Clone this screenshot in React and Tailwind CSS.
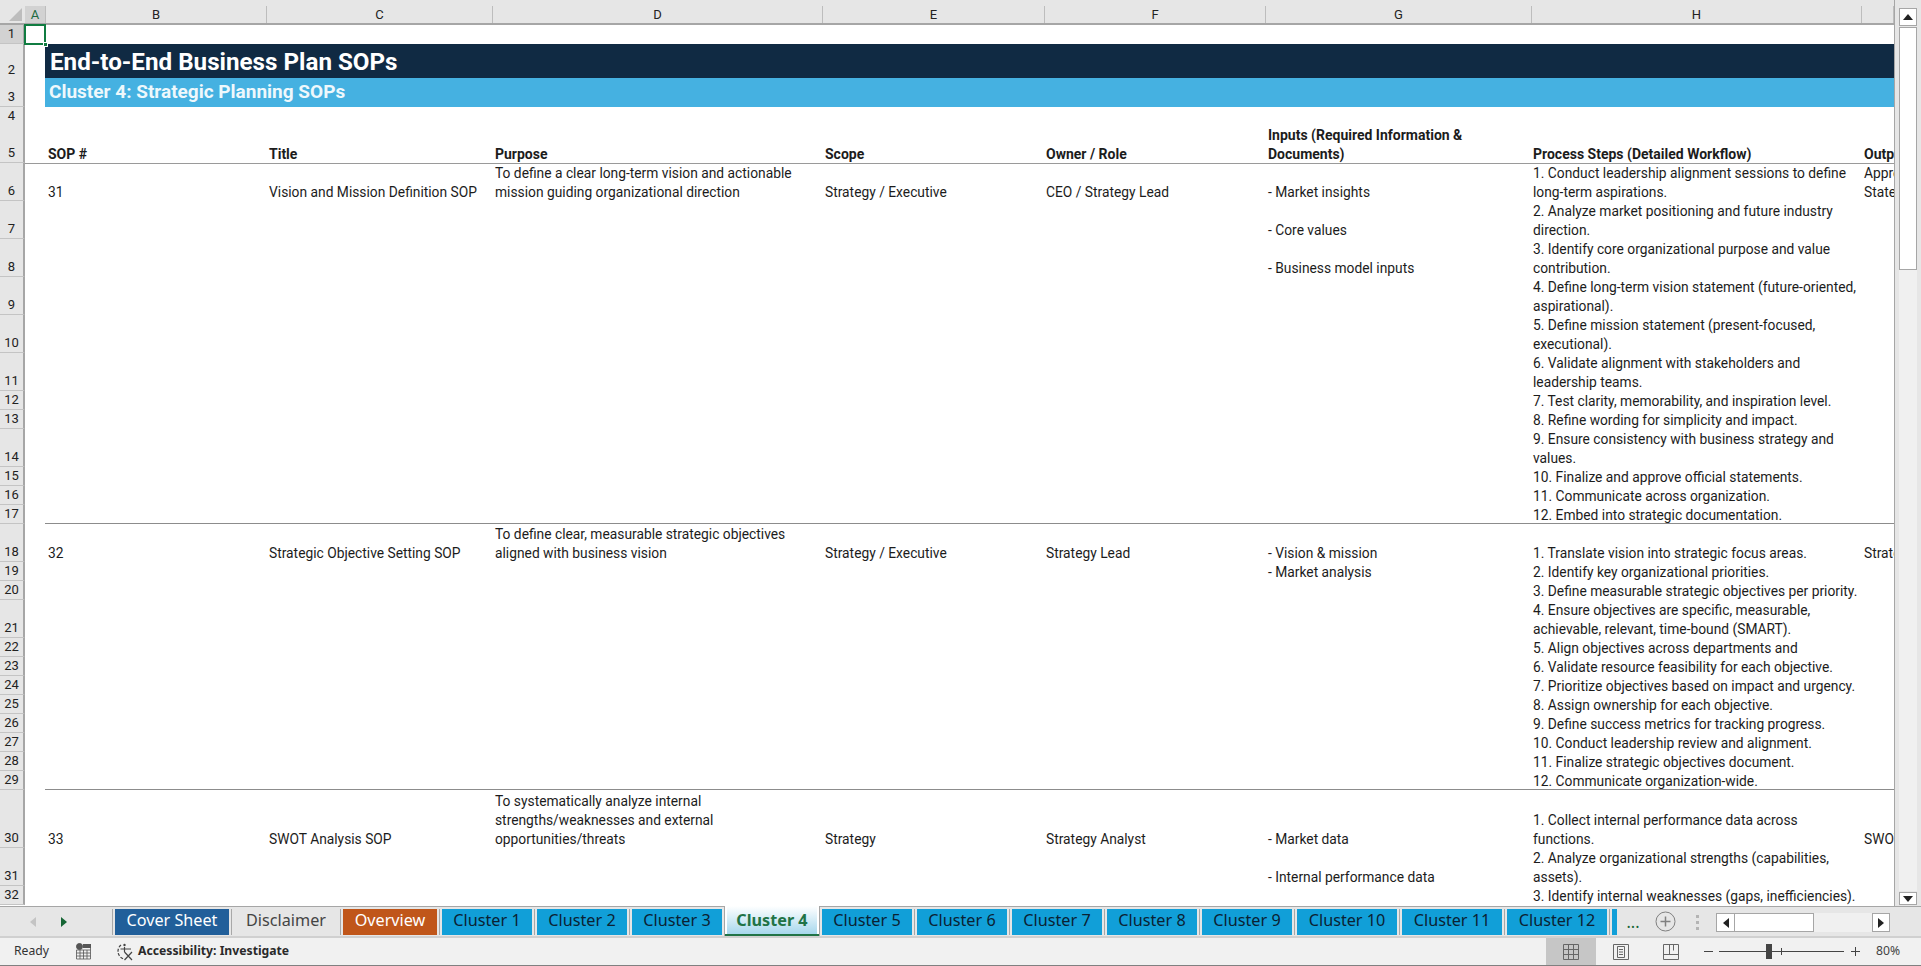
const cols = ["A", "B", "C", "D", "E", "F", "G", "H", "I"];
const colWidths = {
  A: "w-[21px]",
  B: "w-[221px]",
  C: "w-[226px]",
  D: "w-[330px]",
  E: "w-[222px]",
  F: "w-[221px]",
  G: "w-[266px]",
  H: "w-[330px]",
  I: "w-[32px]",
};

const gridCols = "grid grid-cols-[25px_20px_221px_226px_330px_221px_222px_265px_331px_33px]";

const rows = [
  { n: 6, h: "h-[38px]", b: "31", c: "Vision and Mission Definition SOP", d: "To define a clear long-term vision and actionable\nmission guiding organizational direction", e: "Strategy / Executive", f: "CEO / Strategy Lead", g: "- Market insights", p: "1. Conduct leadership alignment sessions to define\nlong-term aspirations.", i: "Approved\nStatements" },
  { n: 7, h: "h-[38px]", g: "- Core values", p: "2. Analyze market positioning and future industry\ndirection." },
  { n: 8, h: "h-[38px]", g: "- Business model inputs", p: "3. Identify core organizational purpose and value\ncontribution." },
  { n: 9, h: "h-[38px]", p: "4. Define long-term vision statement (future-oriented,\naspirational)." },
  { n: 10, h: "h-[38px]", p: "5. Define mission statement (present-focused,\nexecutional)." },
  { n: 11, h: "h-[38px]", p: "6. Validate alignment with stakeholders and\nleadership teams." },
  { n: 12, h: "h-[19px]", p: "7. Test clarity, memorability, and inspiration level." },
  { n: 13, h: "h-[19px]", p: "8. Refine wording for simplicity and impact." },
  { n: 14, h: "h-[38px]", p: "9. Ensure consistency with business strategy and\nvalues." },
  { n: 15, h: "h-[19px]", p: "10. Finalize and approve official statements." },
  { n: 16, h: "h-[19px]", p: "11. Communicate across organization." },
  { n: 17, h: "h-[19px]", p: "12. Embed into strategic documentation.", line: true },
  { n: 18, h: "h-[38px]", b: "32", c: "Strategic Objective Setting SOP", d: "To define clear, measurable strategic objectives\naligned with business vision", e: "Strategy / Executive", f: "Strategy Lead", g: "- Vision & mission", p: "1. Translate vision into strategic focus areas.", i: "Strategic" },
  { n: 19, h: "h-[19px]", g: "- Market analysis", p: "2. Identify key organizational priorities." },
  { n: 20, h: "h-[19px]", p: "3. Define measurable strategic objectives per priority." },
  { n: 21, h: "h-[38px]", p: "4. Ensure objectives are specific, measurable,\nachievable, relevant, time-bound (SMART)." },
  { n: 22, h: "h-[19px]", p: "5. Align objectives across departments and" },
  { n: 23, h: "h-[19px]", p: "6. Validate resource feasibility for each objective." },
  { n: 24, h: "h-[19px]", p: "7. Prioritize objectives based on impact and urgency." },
  { n: 25, h: "h-[19px]", p: "8. Assign ownership for each objective." },
  { n: 26, h: "h-[19px]", p: "9. Define success metrics for tracking progress." },
  { n: 27, h: "h-[19px]", p: "10. Conduct leadership review and alignment." },
  { n: 28, h: "h-[19px]", p: "11. Finalize strategic objectives document." },
  { n: 29, h: "h-[19px]", p: "12. Communicate organization-wide.", line: true },
  { n: 30, h: "h-[58px]", b: "33", c: "SWOT Analysis SOP", d: "To systematically analyze internal\nstrengths/weaknesses and external\nopportunities/threats", e: "Strategy", f: "Strategy Analyst", g: "- Market data", p: "1. Collect internal performance data across\nfunctions.", i: "SWOT" },
  { n: 31, h: "h-[38px]", g: "- Internal performance data", p: "2. Analyze organizational strengths (capabilities,\nassets)." },
  { n: 32, h: "h-[19px]", p: "3. Identify internal weaknesses (gaps, inefficiencies)." },
];

const tabs = [
  { name: "Cover Sheet", w: "w-[114px]", cls: "bg-[#215f9a] text-white" },
  { name: "Disclaimer", w: "w-[104px]", cls: "text-[#444444]" },
  { name: "Overview", w: "w-[94px]", cls: "bg-[#c0561a] text-white" },
  { name: "Cluster 1", w: "w-[90px]", cls: "bg-[#119fd8] text-[#0b2233]" },
  { name: "Cluster 2", w: "w-[90px]", cls: "bg-[#119fd8] text-[#0b2233]" },
  { name: "Cluster 3", w: "w-[90px]", cls: "bg-[#119fd8] text-[#0b2233]" },
];

const tabsAfter = [
  { name: "Cluster 5", w: "w-[90px]" },
  { name: "Cluster 6", w: "w-[90px]" },
  { name: "Cluster 7", w: "w-[90px]" },
  { name: "Cluster 8", w: "w-[90px]" },
  { name: "Cluster 9", w: "w-[90px]" },
  { name: "Cluster 10", w: "w-[100px]" },
  { name: "Cluster 11", w: "w-[100px]" },
  { name: "Cluster 12", w: "w-[100px]" },
];

function Cell({ children, bold }) {
  return (
    <div className={`flex items-end min-w-0 overflow-hidden px-[3px] leading-[19px] whitespace-pre ${bold ? "font-bold text-[14px]" : ""}`}>
      <span className="translate-y-[1px]">{children}</span>
    </div>
  );
}

function RowLabel({ n, active }) {
  return (
    <div
      className={`flex items-end justify-center border-r-2 border-b border-r-[#a6a6a6] border-b-[#c4c4c4] text-[13px] leading-[18px] text-[#222222] ${
        active ? "bg-[#d2d2d2] text-[#1d6b40]" : "bg-[#e6e6e6]"
      }`}
    >
      {n}
    </div>
  );
}

function Triangle({ dir, color }) {
  return (
    <svg width="8" height="12" viewBox="0 0 8 12">
      <path d={dir === "left" ? "M7 1 L1 6 L7 11 Z" : "M1 1 L7 6 L1 11 Z"} fill={color} />
    </svg>
  );
}

function Sep() {
  return <div className="w-[1px] h-[26px] mx-[2px] bg-[#a8a8a8]" />;
}

export default function App() {
  return (
    <div className="w-screen h-screen flex flex-col overflow-hidden bg-white text-[13.8px] text-[#1c1c1c] font-['Roboto',sans-serif]">
      <div className="flex h-[906px] min-h-0">
        {/* sheet */}
        <div className="relative w-[1895px] overflow-hidden border-r border-r-[#a6a6a6]">
          <div className="flex h-[25px] bg-[#e6e6e6] border-b-2 border-b-[#a6a6a6] text-[13px]">
            <div className="relative w-[25px]">
              <svg className="absolute right-[3px] bottom-[2px]" width="13" height="13" viewBox="0 0 13 13">
                <path d="M13 0 V13 H0 Z" fill="#bdbdbd" />
              </svg>
            </div>
            {cols.map((c) => (
              <div
                key={c}
                className={`${colWidths[c]} mt-[6px] flex items-center justify-center border-r border-r-[#bdbdbd] ${
                  c === "A" ? "bg-[#d2d2d2] text-[#1d6b40]" : "text-[#222222]"
                }`}
              >
                {c === "I" ? "" : c}
              </div>
            ))}
          </div>

          <div className={`${gridCols} h-[19px]`}>
            <RowLabel n={1} active />
          </div>
          <div className={`${gridCols} h-[34px]`}>
            <RowLabel n={2} />
            <div />
            <div className="col-span-8 bg-[#102a43] flex items-center pl-[5px] text-[24.2px] font-bold text-white whitespace-nowrap">
              End-to-End Business Plan SOPs
            </div>
          </div>
          <div className={`${gridCols} h-[29px]`}>
            <RowLabel n={3} />
            <div />
            <div className="col-span-8 bg-[#45b1e1] flex items-center pl-[4px] text-[19px] font-bold text-[#eef8fc] whitespace-nowrap">
              Cluster 4: Strategic Planning SOPs
            </div>
          </div>
          <div className={`${gridCols} h-[18px]`}>
            <RowLabel n={4} />
          </div>
          <div className={`${gridCols} h-[38px] relative`}>
            <RowLabel n={5} />
            <div />
            <Cell bold>SOP #</Cell>
            <Cell bold>Title</Cell>
            <Cell bold>Purpose</Cell>
            <Cell bold>Scope</Cell>
            <Cell bold>Owner / Role</Cell>
            <Cell bold>{"Inputs (Required Information &\nDocuments)"}</Cell>
            <Cell bold>Process Steps (Detailed Workflow)</Cell>
            <Cell bold>Outputs</Cell>
            <div className="absolute left-[25px] right-0 -bottom-[1px] h-[1px] bg-[#9a9a9a]" />
          </div>

          {rows.map((r) => (
            <div key={r.n} className={`${gridCols} ${r.h} relative`}>
              <RowLabel n={r.n} />
              <div />
              <Cell>{r.b}</Cell>
              <Cell>{r.c}</Cell>
              <Cell>{r.d}</Cell>
              <Cell>{r.e}</Cell>
              <Cell>{r.f}</Cell>
              <Cell>{r.g}</Cell>
              <Cell>{r.p}</Cell>
              <Cell>{r.i}</Cell>
              {r.line && <div className="absolute left-[45px] right-0 bottom-0 h-[1px] bg-[#8c8c8c]" />}
            </div>
          ))}

          {/* active cell A1 */}
          <div className="absolute left-[24px] top-[24px] w-[22px] h-[21px] border-2 border-[#107c41]" />
          <div className="absolute left-[43px] top-[42px] w-[5px] h-[5px] bg-[#107c41] border border-white" />
        </div>

        {/* vertical scrollbar */}
        <div className="w-[26px] flex flex-col items-center bg-[#e6e6e6] pt-[8px] pb-[1px]">
          <div className="w-[18px] h-[18px] bg-white border border-[#a6a6a6] flex items-center justify-center">
            <svg width="10" height="6" viewBox="0 0 10 6"><path d="M5 0 L10 6 H0 Z" fill="#222222" /></svg>
          </div>
          <div className="w-[18px] flex-1 flex flex-col bg-[#f0f0f0] my-[1px]">
            <div className="h-[243px] bg-white border border-[#a6a6a6]" />
          </div>
          <div className="w-[18px] h-[13px] bg-white border border-[#a6a6a6] flex items-center justify-center">
            <svg width="10" height="6" viewBox="0 0 10 6"><path d="M0 0 H10 L5 6 Z" fill="#222222" /></svg>
          </div>
        </div>
      </div>

      {/* sheet tabs */}
      <div className="relative flex h-[32px] items-start bg-[#e6e6e6] border-t border-t-[#a6a6a6] border-b-2 border-b-[#d0d0d0] pt-[2px] text-[16.2px] font-['Noto_Sans',sans-serif]">
        <div className="w-[112px] h-[26px] flex items-center">
          <div className="ml-[29px]"><Triangle dir="left" color="#c4c4c4" /></div>
          <div className="ml-[23px]"><Triangle dir="right" color="#166534" /></div>
        </div>
        <div className="w-[1px] h-[26px] mr-[2px] bg-[#a8a8a8]" />
        {tabs.map((t) => (
          <div key={t.name} className="flex">
            <div className={`${t.w} h-[26px] pb-[3px] flex items-center justify-center ${t.cls}`}>{t.name}</div>
            <Sep />
          </div>
        ))}
        <div className="relative w-[96px] h-[30px] -mt-[3px] -ml-[3px] mr-[2px] flex flex-col bg-white border-x border-x-[#a6a6a6]">
          <div className="flex-1 mx-[2px] flex items-center justify-center font-bold text-[#217346] bg-gradient-to-b from-white to-[#a6d7ec]">
            Cluster 4
          </div>
          <div className="h-[2px] bg-[#217346]" />
        </div>
        {tabsAfter.map((t) => (
          <div key={t.name} className="flex">
            <div className={`${t.w} h-[26px] pb-[3px] flex items-center justify-center bg-[#119fd8] text-[#0b2233]`}>{t.name}</div>
            <Sep />
          </div>
        ))}
        <div className="w-[5px] h-[26px] bg-[#119fd8]" />
        <div className="w-[32px] h-[26px] flex items-center justify-center text-[#166534]">...</div>
        <div className="ml-[4px] w-[24px] h-[24px] flex items-center justify-center">
          <svg width="21" height="21" viewBox="0 0 21 21" fill="none" stroke="#808080">
            <circle cx="10.5" cy="10.5" r="9.5" />
            <path d="M10.5 5.5 V15.5 M5.5 10.5 H15.5" strokeWidth="1.5" />
          </svg>
        </div>
        <div className="ml-[19px] w-[3px] h-[26px] flex flex-col justify-center gap-[3px]">
          <div className="h-[3px] bg-[#b4b4b4]" />
          <div className="h-[3px] bg-[#b4b4b4]" />
          <div className="h-[3px] bg-[#b4b4b4]" />
        </div>
        <div className="ml-[17px] mt-[4px] w-[174px] h-[19px] flex bg-[#f0f0f0]">
          <div className="w-[19px] bg-white border border-[#a6a6a6] flex items-center justify-center">
            <Triangle dir="left" color="#222222" />
          </div>
          <div className="w-[79px] bg-white border border-l-0 border-[#a6a6a6]" />
          <div className="flex-1" />
          <div className="w-[18px] bg-white border border-[#a6a6a6] flex items-center justify-center">
            <Triangle dir="right" color="#222222" />
          </div>
        </div>
      </div>

      {/* status bar */}
      <div className="flex flex-1 items-center bg-[#f1f1f1] border-b border-b-[#808080] text-[12.2px] text-[#333333] font-['Noto_Sans',sans-serif]">
        <span className="ml-[14px] w-[62px]">Ready</span>
        <svg width="15" height="17" viewBox="0 0 15 17" fill="none" stroke="#555555">
          <circle cx="3.5" cy="3.5" r="3" fill="#555555" />
          <path d="M7 1.5 H14.5 V16 H0.5 V7 H14.5 M0.5 10 H14.5 M0.5 13 H14.5 M4 7 V16 M7.5 7 V16 M11 7 V16" strokeWidth="0.8" />
          <path d="M7 1 H15 V5 H7 Z" fill="#555555" stroke="none" />
        </svg>
        <svg className="ml-[24px]" width="20" height="20" viewBox="0 0 20 20" fill="none" stroke="#444444" strokeWidth="1.2">
          <path d="M6 3 A8 8 0 0 0 9 17" strokeDasharray="3 1.5" />
          <circle cx="9.5" cy="3" r="1.2" fill="#444444" stroke="none" />
          <path d="M9.5 5 V10 M5.5 7 H16 M9.5 10 L17 18 M17 10 L9.5 18" />
        </svg>
        <span className="ml-[3px] font-bold text-[#2a2a2a] whitespace-nowrap">Accessibility: Investigate</span>
        <div className="flex-1" />
        <div className="w-[50px] h-full flex items-center justify-center bg-[#c6c6c6]">
          <svg width="16" height="16" viewBox="0 0 16 16" fill="none" stroke="#666666">
            <path d="M.5 .5 H15.5 V15.5 H.5 Z M5.5 .5 V15.5 M10.5 .5 V15.5 M.5 5.5 H15.5 M.5 10.5 H15.5" />
          </svg>
        </div>
        <div className="w-[50px] h-full flex items-center justify-center">
          <svg width="16" height="16" viewBox="0 0 16 16" fill="none" stroke="#666666">
            <path d="M.5 .5 H15.5 V15.5 H.5 Z M4.5 2.5 H11.5 V13.5 H4.5 Z M6 5.5 H10 M6 8 H10 M6 10.5 H10" />
          </svg>
        </div>
        <div className="w-[50px] h-full flex items-center justify-center">
          <svg width="16" height="16" viewBox="0 0 16 16" fill="none" stroke="#666666">
            <path d="M.5 .5 H15.5 V15.5 H.5 Z M.5 10.5 H15.5 M6.5 .5 V10.5 M10.5 .5 V6.5" />
          </svg>
        </div>
        <div className="ml-[8px] w-[9px] h-[1.5px] bg-[#444444]" />
        <div className="relative ml-[6px] w-[125px] h-[1.5px] bg-[#444444]">
          <div className="absolute left-[47px] -top-[7px] w-[6px] h-[15px] bg-[#444444]" />
          <div className="absolute left-[62px] -top-[3px] w-[1px] h-[7px] bg-[#444444]" />
        </div>
        <svg className="ml-[7px]" width="9" height="9" viewBox="0 0 9 9" stroke="#444444"><path d="M4.5 0 V9 M0 4.5 H9" /></svg>
        <span className="ml-[16px] w-[24px] mr-[21px] whitespace-nowrap text-[#444444]">80%</span>
      </div>
    </div>
  );
}
